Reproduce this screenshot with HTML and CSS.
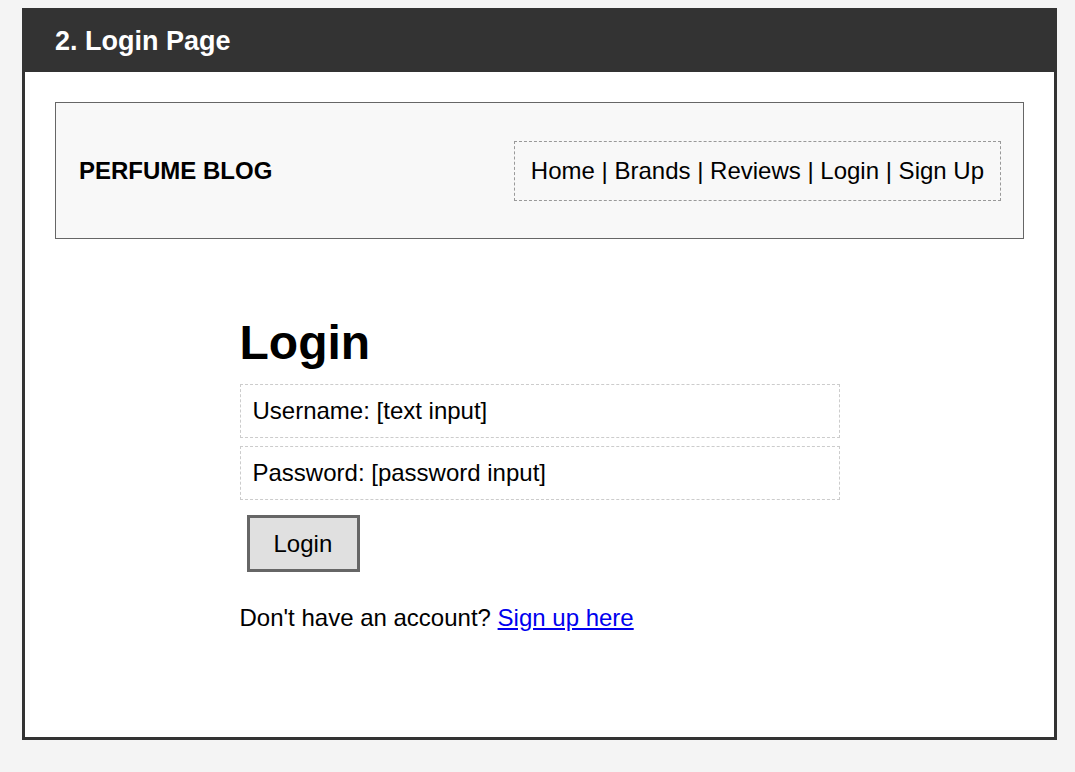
FILE: index.html
```html
<!DOCTYPE html>
<html lang="en">
<head>
<meta charset="utf-8">
<title>Login Page</title>
<link rel="stylesheet" href="styles.css">
</head>
<body>
<div class="frame">
  <div class="frame-title">2. Login Page</div>
  <div class="frame-body">
    <div class="site-header">
      <div class="logo">PERFUME BLOG</div>
      <div class="nav">Home | Brands | Reviews | Login | Sign Up</div>
    </div>
    <div class="login">
      <h1 class="login-title">Login</h1>
      <div class="field">Username: [text input]</div>
      <div class="field">Password: [password input]</div>
      <div class="actions"><span class="btn">Login</span></div>
      <p class="signup">Don't have an account? <a href="#" class="link">Sign up here</a></p>
    </div>
  </div>
</div>
</body>
</html>
```
FILE: styles.css
```css
html, body {
  margin: 0;
  padding: 0;
}
body {
  background: #f4f4f4;
  font-family: "Liberation Sans", Arial, sans-serif;
  color: #000;
  padding: 8px 18px 0 22px;
}
.frame {
  background: #fff;
  border: 3px solid #333;
  border-top: none;
  height: 732px;
  box-sizing: border-box;
}
.frame-title {
  background: #333;
  color: #fff;
  font-weight: bold;
  font-size: 27px;
  height: 64px;
  line-height: 66px;
  margin: 0 -3px;
  padding-left: 33px;
}
.frame-body {
  padding: 30px 30px;
}
.site-header {
  background: #f8f8f8;
  border: 1px solid #666;
  display: flex;
  align-items: center;
  justify-content: space-between;
  padding: 38px 22px 37px 23px;
}
.logo {
  font-weight: bold;
  font-size: 24px;
}
.nav {
  border: 1px dashed #999;
  font-size: 24px;
  padding: 14px 16px 14px 16px;
  line-height: 30px;
}
.login {
  width: 600px;
  margin: 0 auto;
  padding-top: 75px;
}
.login-title {
  font-size: 48px;
  margin: 0 0 12px;
  line-height: 58px;
}
.field {
  border: 1px dashed #ccc;
  padding: 12px 12px;
  font-size: 24px;
  line-height: 28px;
  margin-bottom: 8px;
}
.actions {
  padding: 7px 7px 0;
}
.btn {
  display: inline-block;
  background: #e0e0e0;
  border: 3px solid #666;
  font-size: 24px;
  line-height: 51px;
  padding: 0 25px 0 24px;
}
.signup {
  font-size: 24px;
  margin: 31px 0 0;
  line-height: 30px;
}
.link {
  color: #0000ee;
}
```
